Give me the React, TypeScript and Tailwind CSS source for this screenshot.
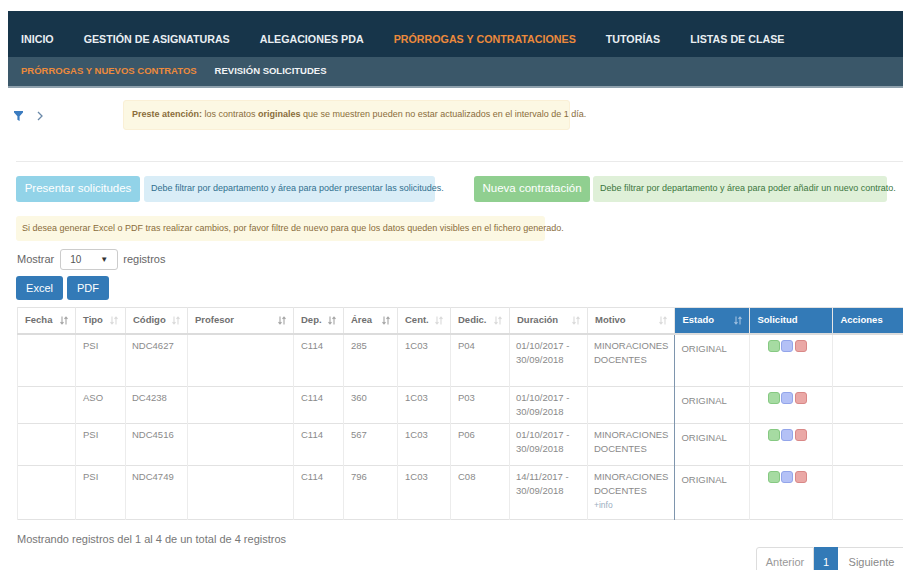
import React from "react";

const navItems = [
  { label: "INICIO" },
  { label: "GESTIÓN DE ASIGNATURAS" },
  { label: "ALEGACIONES PDA" },
  { label: "PRÓRROGAS Y CONTRATACIONES", active: true },
  { label: "TUTORÍAS" },
  { label: "LISTAS DE CLASE" },
];

type Row = {
  tipo: string;
  codigo: string;
  dep: string;
  area: string;
  cent: string;
  dedic: string;
  duracion: [string, string];
  motivo: string[];
  info?: boolean;
  h: string;
};

const rows: Row[] = [
  { tipo: "PSI", codigo: "NDC4627", dep: "C114", area: "285", cent: "1C03", dedic: "P04", duracion: ["01/10/2017 -", "30/09/2018"], motivo: ["MINORACIONES", "DOCENTES"], h: "h-[53px]" },
  { tipo: "ASO", codigo: "DC4238", dep: "C114", area: "360", cent: "1C03", dedic: "P03", duracion: ["01/10/2017 -", "30/09/2018"], motivo: [], h: "h-[37px]" },
  { tipo: "PSI", codigo: "NDC4516", dep: "C114", area: "567", cent: "1C03", dedic: "P06", duracion: ["01/10/2017 -", "30/09/2018"], motivo: ["MINORACIONES", "DOCENTES"], h: "h-[42px]" },
  { tipo: "PSI", codigo: "NDC4749", dep: "C114", area: "796", cent: "1C03", dedic: "C08", duracion: ["14/11/2017 -", "30/09/2018"], motivo: ["MINORACIONES", "DOCENTES"], info: true, h: "h-[54px]" },
];

const SortIcon = ({ active, light }: { active?: boolean; light?: boolean }) => (
  <svg width="8" height="9" viewBox="0 0 8 9" fill="none" strokeWidth="1.1"
    className={light ? "stroke-[#9fc0e0]" : active ? "stroke-[#a5a5a5]" : "stroke-[#dadada]"}>
    <path d="M2 0.5v7.5M0.5 6.2 2 8l1.5-1.8" />
    <path d="M6 8.5V1M4.5 2.8 6 1l1.5 1.8" />
  </svg>
);

const headers: { label: string; sort?: boolean; active?: boolean; blue?: boolean }[] = [
  { label: "Fecha", sort: true, active: true },
  { label: "Tipo", sort: true },
  { label: "Código", sort: true },
  { label: "Profesor", sort: true, active: true },
  { label: "Dep.", sort: true, active: true },
  { label: "Área", sort: true, active: true },
  { label: "Cent.", sort: true },
  { label: "Dedic.", sort: true },
  { label: "Duración", sort: true },
  { label: "Motivo", sort: true },
  { label: "Estado", sort: true, blue: true },
  { label: "Solicitud", blue: true },
  { label: "Acciones", blue: true },
];

const widths = [58, 50, 62, 106, 50, 54, 53, 59, 78, 86, 75, 83, 78];

const App = () => {
  return (
    <div className="w-[903px] h-[570px] overflow-hidden bg-white font-['Liberation_Sans',Arial,sans-serif]">
      <div className="w-[920px] pt-[11px]">
        {/* Top navigation */}
        <div className="ml-[8px] bg-[#17354a] h-[46px] pt-[10px] flex items-center pl-[13px] gap-[30px]">
          {navItems.map((n) => (
            <span
              key={n.label}
              className={`text-[10.7px] font-bold whitespace-nowrap ${n.active ? "text-[#ec8a3c]" : "text-[#e9eef2]"}`}
            >
              {n.label}
            </span>
          ))}
        </div>
        <div className="ml-[8px] bg-[#3a5769] h-[31px] border-b-2 border-[#8fa1ad] flex items-center pl-[13px] gap-[18px]">
          <span className="text-[9.5px] font-bold text-[#ec8a3c]">PRÓRROGAS Y NUEVOS CONTRATOS</span>
          <span className="text-[9.5px] font-bold text-[#f2f4f6]">REVISIÓN SOLICITUDES</span>
        </div>

        <div className="pl-[16px]">
          {/* Filter toggle + notice */}
          <div className="flex mt-[12px] h-[30px]">
            <div className="flex items-start gap-[14px] pt-[11px] w-[107px]">
              <svg width="9" height="10" viewBox="0 0 9 10" className="-ml-[2px]">
                <path d="M0 0h9v1.5L5.6 5.2V10L3.4 8.8V5.2L0 1.5Z" fill="#3b7cc0" />
              </svg>
              <svg width="6" height="10" viewBox="0 0 6 10" fill="none">
                <path d="M1 1l4 4-4 4" stroke="#6a88a8" strokeWidth="1.3" />
              </svg>
            </div>
            <div className="w-[447px] bg-[#fcf8e3] border border-[#faf0d6] rounded-[3px] flex items-center pl-[8px] text-[9px] text-[#8a6d3b] whitespace-nowrap">
              <b>Preste atención:</b>&nbsp;los contratos&nbsp;<b>originales</b>&nbsp;que se muestren pueden no estar actualizados en el intervalo de 1 día.
            </div>
          </div>

          <div className="mt-[31px] h-px bg-[#eaeaea]" />

          {/* Action buttons with notices */}
          <div className="mt-[14px] flex h-[26px] items-stretch">
            <div className="w-[124px] bg-[#92d3e8] rounded-[3px] flex items-center justify-center text-white text-[11.5px]">
              Presentar solicitudes
            </div>
            <div className="ml-[4px] w-[291px] bg-[#d9edf7] rounded-[3px] flex items-center pl-[7px] text-[9px] text-[#31708f] whitespace-nowrap">
              Debe filtrar por departamento y área para poder presentar las solicitudes.
            </div>
            <div className="ml-[39px] w-[116px] bg-[#90cf90] rounded-[3px] flex items-center justify-center text-white text-[11.5px]">
              Nueva contratación
            </div>
            <div className="ml-[3px] w-[294px] bg-[#dff0d8] rounded-[3px] flex items-center pl-[7px] text-[9px] text-[#3c763d] whitespace-nowrap">
              Debe filtrar por departamento y área para poder añadir un nuevo contrato.
            </div>
          </div>

          <div className="mt-[14px] w-[529px] h-[25px] bg-[#fcf8e3] rounded-[3px] flex items-center pl-[6px] text-[9px] text-[#8a6d3b] whitespace-nowrap">
            Si desea generar Excel o PDF tras realizar cambios, por favor filtre de nuevo para que los datos queden visibles en el fichero generado.
          </div>

          {/* Length selector */}
          <div className="mt-[8px] flex items-center h-[21px] text-[11px] text-[#666]">
            <span className="ml-[1px]">Mostrar</span>
            <div className="ml-[6px] w-[58px] h-[21px] border border-[#ccc] rounded-[3px] flex items-center justify-between px-[9px] text-[10px] text-[#555]">
              <span>10</span>
              <span className="text-[8px] text-[#333]">▼</span>
            </div>
            <span className="ml-[5px]">registros</span>
          </div>

          <div className="mt-[6px] flex gap-[4px] h-[24px]">
            <div className="w-[47px] bg-[#337ab7] rounded-[3px] flex items-center justify-center text-white text-[11px]">Excel</div>
            <div className="w-[42px] bg-[#337ab7] rounded-[3px] flex items-center justify-center text-white text-[11px]">PDF</div>
          </div>

          {/* Contracts table */}
          <table className="mt-[7px] ml-[1px] table-fixed border-collapse border border-[#e2e2e2] text-[9.5px] text-[#8a8a8a]">
            <colgroup>
              {widths.map((w, i) => (
                <col key={i} style={{ width: w }} />
              ))}
            </colgroup>
            <thead>
              <tr className="h-[26px] border-b-2 border-[#dcdcdc]">
                {headers.map((h) => (
                  <th
                    key={h.label}
                    className={`px-[7px] text-left font-bold text-[9.5px] border-x border-[#e6e6e6] ${h.blue ? "bg-[#337ab7] text-white border-[#5a93c6]" : "text-[#707070]"}`}
                  >
                    <div className="flex items-center justify-between">
                      <span>{h.label}</span>
                      {h.sort && <SortIcon active={h.active} light={h.blue} />}
                    </div>
                  </th>
                ))}
              </tr>
            </thead>
            <tbody>
              {rows.map((r) => (
                <tr key={r.codigo} className={`${r.h} border-b border-[#e2e2e2] align-top leading-[14px]`}>
                  <td className="border-x border-[#ececec]" />
                  <td className="px-[7px] pt-[4px] border-x border-[#ececec]">{r.tipo}</td>
                  <td className="px-[6px] pt-[4px] border-x border-[#ececec]">{r.codigo}</td>
                  <td className="border-x border-[#ececec]" />
                  <td className="px-[7px] pt-[4px] border-x border-[#ececec]">{r.dep}</td>
                  <td className="px-[7px] pt-[4px] border-x border-[#ececec]">{r.area}</td>
                  <td className="px-[7px] pt-[4px] border-x border-[#ececec]">{r.cent}</td>
                  <td className="px-[7px] pt-[4px] border-x border-[#ececec]">{r.dedic}</td>
                  <td className="px-[6px] pt-[4px] border-x border-[#ececec]">
                    <div>{r.duracion[0]}</div>
                    <div>{r.duracion[1]}</div>
                  </td>
                  <td className="px-[6px] pt-[4px] border-l border-[#ececec]">
                    {r.motivo.map((m) => (
                      <div key={m}>{m}</div>
                    ))}
                    {r.info && <div className="text-[8.5px] text-[#9aaec0]">+info</div>}
                  </td>
                  <td className="px-[6px] pt-[7px] border-l border-[#7e95ad] border-r border-r-[#ececec]">ORIGINAL</td>
                  <td className="pt-[5px] border-x border-[#ececec]">
                    <div className="flex justify-center gap-[1.5px] pr-[8px]">
                      <span className="w-[12px] h-[12px] rounded-[3px] bg-[#a6dba2] border border-[#86c982]" />
                      <span className="w-[12px] h-[12px] rounded-[3px] bg-[#b4c1f6] border border-[#93a5ea]" />
                      <span className="w-[12px] h-[12px] rounded-[3px] bg-[#eaa8a6] border border-[#d98887]" />
                    </div>
                  </td>
                  <td className="border-x border-[#ececec]" />
                </tr>
              ))}
            </tbody>
          </table>

          <div className="mt-[12px] ml-[1px] text-[11px] leading-[14px] text-[#777]">
            Mostrando registros del 1 al 4 de un total de 4 registros
          </div>

          {/* Pagination */}
          <div className="mt-[1px] mr-[14px] flex justify-end h-[30px] text-[11px]">
            <div className="w-[58px] border border-[#ddd] rounded-l-[3px] flex items-center justify-center text-[#999]">Anterior</div>
            <div className="w-[24px] bg-[#337ab7] border border-[#337ab7] flex items-center justify-center text-white">1</div>
            <div className="w-[68px] border border-[#ddd] border-l-0 rounded-r-[3px] flex items-center justify-center text-[#888]">Siguiente</div>
          </div>
        </div>
      </div>
    </div>
  );
};

export default App;
